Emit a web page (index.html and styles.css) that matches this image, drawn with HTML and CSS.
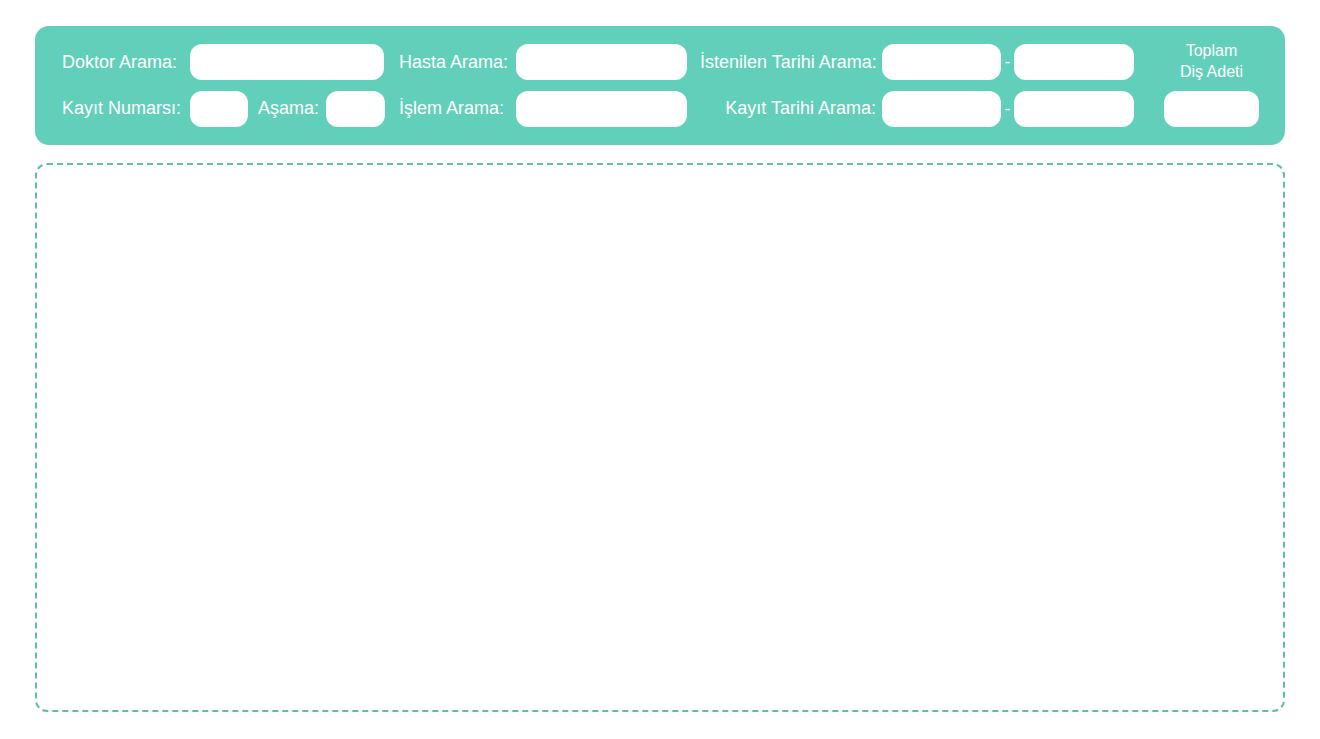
FILE: index.html
```html
<!DOCTYPE html>
<html lang="tr">
<head>
<meta charset="utf-8">
<title>Arama</title>
<link rel="stylesheet" href="styles.css">
</head>
<body>
<div class="page">
  <form class="filters">
    <div class="group g1">
      <label class="lbl">Doktor Arama:</label>
      <input class="field" type="text">
      <label class="lbl r2">Kayıt Numarsı:</label>
      <div class="pair">
        <input class="field small" type="text">
        <label class="lbl r2 asama">Aşama:</label>
        <input class="field small2" type="text">
      </div>
    </div>
    <div class="group g2">
      <label class="lbl">Hasta Arama:</label>
      <input class="field" type="text">
      <label class="lbl r2">İşlem Arama:</label>
      <input class="field" type="text">
    </div>
    <div class="group g3">
      <label class="lbl right">İstenilen Tarihi Arama:</label>
      <input class="field" type="text">
      <span class="dash">-</span>
      <input class="field" type="text">
      <label class="lbl right r2">Kayıt Tarihi Arama:</label>
      <input class="field" type="text">
      <span class="dash">-</span>
      <input class="field" type="text">
    </div>
    <div class="group g4">
      <div class="total-lbl">Toplam<br>Diş Adeti</div>
      <input class="field" type="text">
    </div>
  </form>
  <div class="results"></div>
</div>
</body>
</html>
```

FILE: styles.css
```css
* { box-sizing: border-box; }
html, body { margin: 0; padding: 0; background: #ffffff; }
body {
  font-family: "Liberation Sans", Arial, Helvetica, sans-serif;
  color: #ffffff;
}
.page {
  padding: 26px 35px 0 35px;
  display: flex;
  flex-direction: column;
  gap: 18px;
}
.filters {
  margin: 0;
  height: 119px;
  background: #62cfbb;
  border-radius: 14px;
  padding: 18px 26px 18px 27px;
  display: flex;
  align-items: stretch;
}
.group {
  display: grid;
  grid-template-rows: 36px 36px;
  row-gap: 11px;
  align-items: center;
}
.g1 { grid-template-columns: 128px 194px; }
.g2 { grid-template-columns: 117px 171px; margin-left: 15px; }
.g3 { grid-template-columns: 182px 119px 13px 120px; margin-left: 13px; }
.g4 { grid-template-columns: 95px; margin-left: 30px; }
.lbl {
  font-size: 18px;
  white-space: nowrap;
  line-height: 20px;
}
.lbl.r2 { padding-bottom: 3px; }
.lbl.right { text-align: right; padding-right: 6px; }
.field {
  display: block;
  width: 100%;
  height: 36px;
  border: 0;
  border-radius: 12px;
  background: #ffffff;
  outline: none;
  padding: 0 10px;
  font: inherit;
}
.pair {
  display: flex;
  align-items: center;
  height: 36px;
}
.field.small { width: 58px; }
.field.small2 { width: 59px; }
.asama { margin-left: 10px; margin-right: 7px; }
.dash {
  font-size: 16px;
  text-align: center;
  line-height: 16px;
}
.total-lbl {
  font-size: 16px;
  line-height: 21px;
  text-align: center;
  margin-top: -2px;
}
.results {
  height: 549px;
  border: 2px dashed #5dbfab;
  border-radius: 12px;
}
```
